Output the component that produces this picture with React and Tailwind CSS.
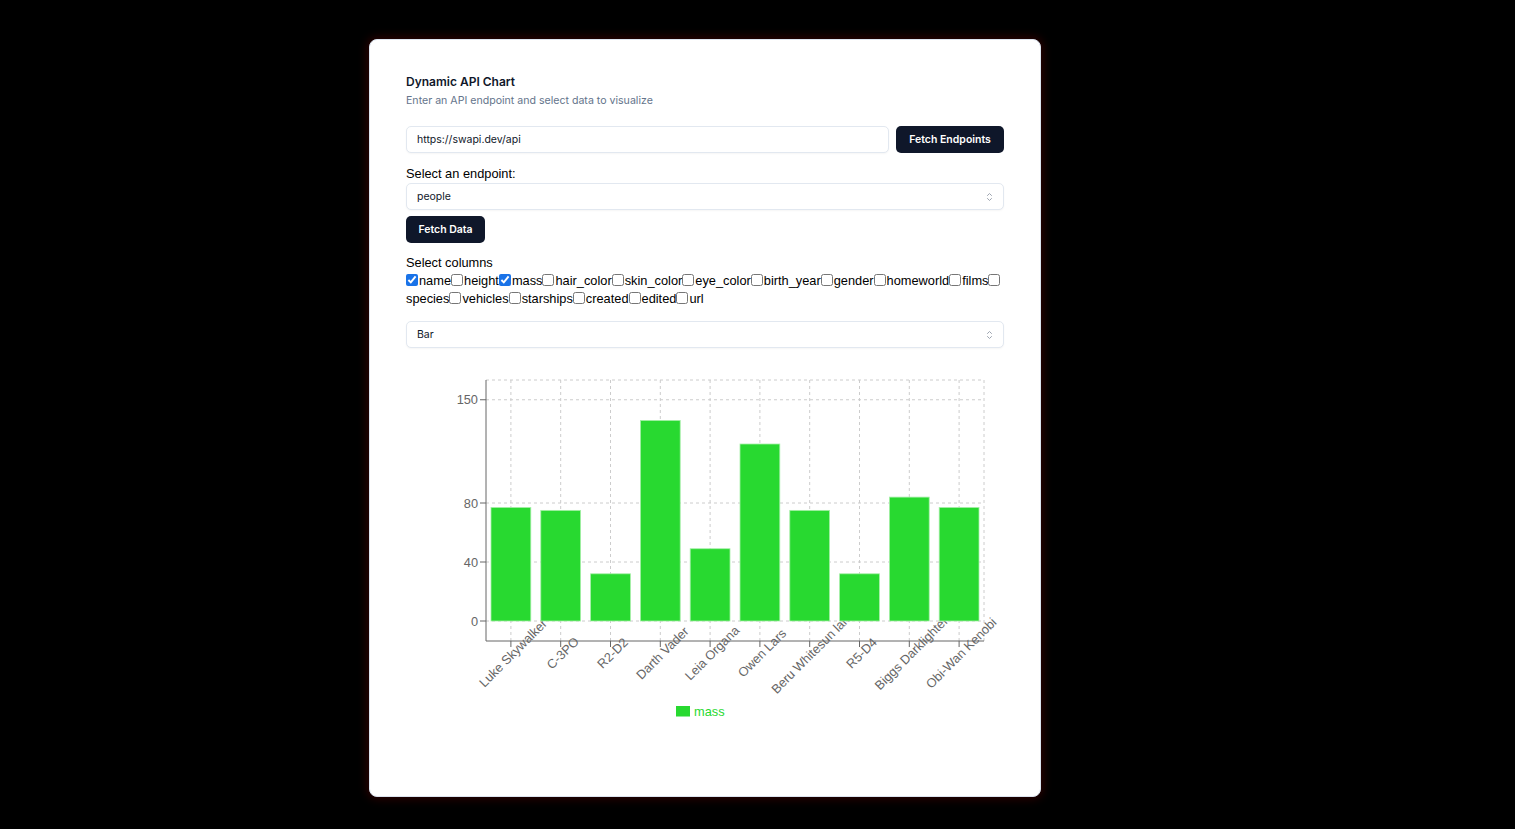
import { useState } from 'react';

const columns = [
    'name', 'height', 'mass', 'hair_color', 'skin_color', 'eye_color', 'birth_year', 'gender',
    'homeworld', 'films', 'species', 'vehicles', 'starships', 'created', 'edited', 'url'
];

const people = [
    { name: 'Luke Skywalker', mass: 77 },
    { name: 'C-3PO', mass: 75 },
    { name: 'R2-D2', mass: 32 },
    { name: 'Darth Vader', mass: 136 },
    { name: 'Leia Organa', mass: 49 },
    { name: 'Owen Lars', mass: 120 },
    { name: 'Beru Whitesun lars', mass: 75 },
    { name: 'R5-D4', mass: 32 },
    { name: 'Biggs Darklighter', mass: 84 },
    { name: 'Obi-Wan Kenobi', mass: 77 }
];

// chart geometry (svg coords)
const LEFT = 80;
const RIGHT = 578;
const TOP = 20;
const ZERO = 261;
const AXIS = 281;
const SCALE = 1.475;
const BAND = (RIGHT - LEFT) / people.length;

const Chevrons = () => (
    <svg width="7" height="10" viewBox="0 0 7 10" fill="none" stroke="#9ca3af" strokeWidth="1" strokeLinecap="round" strokeLinejoin="round">
        <path d="M1.5 3.5 L3.5 1.5 L5.5 3.5" />
        <path d="M1.5 6.5 L3.5 8.5 L5.5 6.5" />
    </svg>
);

const SelectBox = ({ value }) => (
    <div className="flex h-[27px] items-center justify-between rounded-[5px] border border-[#e2e8f0] bg-white px-[10px] shadow-[0_1px_2px_rgba(0,0,0,0.04)]">
        <span className="text-[10.5px] text-[#0f172a]">{value}</span>
        <Chevrons />
    </div>
);

const BarChart = () => {
    const yTicks = [0, 40, 80, 150];
    return (
        <svg width="598" height="370" className="block" style={{ fontFamily: '"Liberation Sans", Arial, sans-serif' }}>
            {/* grid */}
            <g stroke="#cccccc" strokeDasharray="3 3" strokeWidth="1">
                <line x1={LEFT} y1={TOP} x2={RIGHT} y2={TOP} />
                {yTicks.map((t) => (
                    <line key={t} x1={LEFT} y1={ZERO - t * SCALE} x2={RIGHT} y2={ZERO - t * SCALE} />
                ))}
                {people.map((p, i) => {
                    const cx = LEFT + BAND * i + BAND / 2;
                    return <line key={p.name} x1={cx} y1={TOP} x2={cx} y2={AXIS} />;
                })}
                <line x1={RIGHT} y1={TOP} x2={RIGHT} y2={AXIS} />
            </g>

            {/* y axis */}
            <line x1={LEFT} y1={TOP} x2={LEFT} y2={AXIS} stroke="#666" />
            {yTicks.map((t) => (
                <g key={t}>
                    <line x1={LEFT - 6} y1={ZERO - t * SCALE} x2={LEFT} y2={ZERO - t * SCALE} stroke="#666" />
                    <text x={LEFT - 8} y={ZERO - t * SCALE} textAnchor="end" dominantBaseline="central" fontSize="12.8" fill="#666">
                        {t}
                    </text>
                </g>
            ))}

            {/* x axis */}
            <line x1={LEFT} y1={AXIS} x2={RIGHT} y2={AXIS} stroke="#666" />
            {people.map((p, i) => {
                const cx = LEFT + BAND * i + BAND / 2;
                return (
                    <g key={p.name}>
                        <line x1={cx} y1={AXIS} x2={cx} y2={AXIS + 6} stroke="#666" />
                        <text
                            x={cx + 2}
                            y={293}
                            textAnchor="middle"
                            dominantBaseline="central"
                            fontSize="12.8"
                            fill="#666"
                            transform={`rotate(-45 ${cx + 2} 293)`}
                        >
                            {p.name}
                        </text>
                    </g>
                );
            })}

            {/* bars */}
            {people.map((p, i) => (
                <rect
                    key={p.name}
                    x={LEFT + BAND * i + 5}
                    y={ZERO - p.mass * SCALE}
                    width={BAND - 10}
                    height={p.mass * SCALE}
                    fill="#28d930"
                    stroke="#a6efa8"
                    strokeWidth="0.8"
                />
            ))}

            {/* legend */}
            <rect x={270} y={346} width={14} height={10.5} fill="#28d930" />
            <text x={288} y={351} dominantBaseline="central" fontSize="12.8" fill="#28d930">mass</text>
        </svg>
    );
};

export default function App() {
    const [checked, setChecked] = useState({ name: true, mass: true });

    return (
        <div className="min-h-[829px] bg-black pt-[39px] pl-[369px]" style={{ fontFamily: 'Inter, "Noto Sans", sans-serif' }}>
            <div className="h-[758px] w-[672px] rounded-[8px] border border-[#dbe3ee] bg-white px-[36px] pt-[34px] shadow-[0_0_10px_2px_rgba(80,0,0,0.55)]">
                <h1 className="text-[12px] font-semibold leading-4 text-[#0f172a]">Dynamic API Chart</h1>
                <p className="mt-1 text-[10.6px] leading-[14px] text-[#64748b]">Enter an API endpoint and select data to visualize</p>

                <div className="mt-[18px] flex gap-[7px]">
                    <div className="flex h-[27px] flex-1 items-center rounded-[5px] border border-[#e2e8f0] bg-white px-[10px] shadow-[0_1px_2px_rgba(0,0,0,0.04)]">
                        <span className="text-[10.5px] text-[#0f172a]">https://swapi.dev/api</span>
                    </div>
                    <button className="h-[27px] w-[108px] rounded-[5px] bg-[#0f172a] text-[10.5px] font-semibold text-white">
                        Fetch Endpoints
                    </button>
                </div>

                <div style={{ fontFamily: '"Liberation Sans", Arial, sans-serif' }} className="mt-[12px] text-[12.8px] leading-[18px] text-black">
                    Select an endpoint:
                </div>
                <div>
                    <SelectBox value="people" />
                </div>
                <button className="mt-[6px] h-[27px] w-[79px] rounded-[5px] bg-[#0f172a] text-[10.5px] font-semibold text-white">
                    Fetch Data
                </button>

                <div style={{ fontFamily: '"Liberation Sans", Arial, sans-serif' }} className="mt-[11px] text-[12.8px] leading-[18px] text-black">
                    <div>Select columns</div>
                    <div>
                        {columns.map((c) => (
                            <label key={c} className="inline">
                                <input
                                    type="checkbox"
                                    checked={!!checked[c]}
                                    onChange={() => setChecked({ ...checked, [c]: !checked[c] })}
                                    className="m-0 mr-[1px] inline-block h-[12px] w-[12px] align-[-1px] accent-[#1a73e8]"
                                />
                                {c}
                            </label>
                        ))}
                    </div>
                </div>

                <div className="mt-[13px]">
                    <SelectBox value="Bar" />
                </div>

                <div className="mt-[12px]">
                    <BarChart />
                </div>
            </div>
        </div>
    );
}
